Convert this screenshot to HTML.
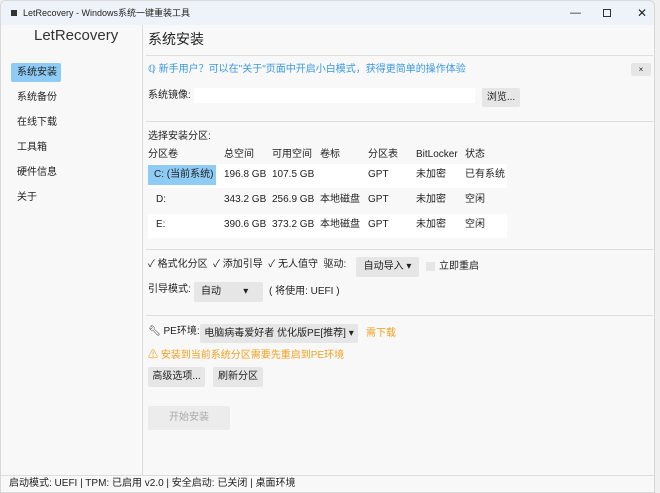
<!DOCTYPE html>
<html><head><meta charset="utf-8"><style>
*{margin:0;padding:0;box-sizing:border-box}
body{width:660px;height:493px;background:#f0f0f0;font-family:"Liberation Sans","Noto Sans CJK SC",sans-serif;font-size:10px;line-height:12px;color:#222;position:relative;overflow:hidden}
.win{position:absolute;left:0;top:0;width:655px;height:493px;background:#f8f8f8;border:1px solid #d8d8d8;border-radius:6px 6px 0 0}
.title{position:absolute;left:0;top:0;width:100%;height:24px;background:#eef3f9;border-radius:6px 6px 0 0}
.a{position:absolute;white-space:nowrap}
.btn{position:absolute;background:#e6e6e6;border-radius:2px;text-align:center}
</style></head><body>
<div class="win">
<div class="title"></div>
<div class="a" style="left:10px;top:9px;width:6px;height:6px;background:#333"></div>
<div class="a" style="left:22px;top:6px;font-size:9px">LetRecovery - Windows系统一键重装工具</div>
<div class="a" style="left:569px;top:6px;font-size:11px">—</div>
<div class="a" style="left:602px;top:8px;width:8px;height:8px;border:1px solid #333"></div>
<div class="a" style="left:636px;top:6px;font-size:12px">✕</div>
<div class="a" style="left:141px;top:24px;width:1px;height:450px;background:#ddd"></div>
<div class="a" style="left:33px;top:27px;font-size:15px;line-height:16px;color:#333">LetRecovery</div>
<div class="a" style="left:10px;top:62px;width:50px;height:19px;background:#8ecbf5;border-radius:2px"></div>
<div class="a" style="left:16px;top:66px">系统安装</div>
<div class="a" style="left:16px;top:91px">系统备份</div>
<div class="a" style="left:16px;top:116px">在线下载</div>
<div class="a" style="left:16px;top:141px">工具箱</div>
<div class="a" style="left:16px;top:166px">硬件信息</div>
<div class="a" style="left:16px;top:191px">关于</div>
<div class="a" style="left:147px;top:30px;font-size:14px;line-height:16px">系统安装</div>
<div class="a" style="left:145px;top:54px;width:507px;height:1px;background:#ddd"></div>
<div class="a" style="left:147px;top:63px;color:#3a98e0">ℚ 新手用户？可以在"关于"页面中开启小白模式，获得更简单的操作体验</div>
<div class="btn" style="left:630px;top:62px;width:20px;height:13px;font-size:8px;line-height:13px">×</div>
<div class="a" style="left:147px;top:89px">系统镜像:</div>
<div class="a" style="left:193px;top:87px;width:281px;height:15px;background:#fff"></div>
<div class="btn" style="left:481px;top:87px;width:38px;height:19px;line-height:19px">浏览...</div>
<div class="a" style="left:145px;top:120px;width:507px;height:1px;background:#ddd"></div>
<div class="a" style="left:147px;top:130px">选择安装分区:</div>
<div class="a" style="left:147px;top:148px">分区卷</div>
<div class="a" style="left:223px;top:148px">总空间</div>
<div class="a" style="left:271px;top:148px">可用空间</div>
<div class="a" style="left:319px;top:148px">卷标</div>
<div class="a" style="left:367px;top:148px">分区表</div>
<div class="a" style="left:415px;top:148px">BitLocker</div>
<div class="a" style="left:464px;top:148px">状态</div>
<div class="a" style="left:147px;top:163px;width:359px;height:24px;background:#fff"></div>
<div class="a" style="left:147px;top:164px;width:68px;height:20px;background:#8ecbf5"></div>
<div class="a" style="left:147px;top:213px;width:359px;height:24px;background:#fff"></div>
<div class="a" style="left:153px;top:168px">C: (当前系统)</div>
<div class="a" style="left:223px;top:168px">196.8 GB</div><div class="a" style="left:271px;top:168px">107.5 GB</div>
<div class="a" style="left:367px;top:168px">GPT</div><div class="a" style="left:415px;top:168px">未加密</div><div class="a" style="left:464px;top:168px">已有系统</div>
<div class="a" style="left:155px;top:193px">D:</div>
<div class="a" style="left:223px;top:193px">343.2 GB</div><div class="a" style="left:271px;top:193px">256.9 GB</div><div class="a" style="left:319px;top:193px">本地磁盘</div>
<div class="a" style="left:367px;top:193px">GPT</div><div class="a" style="left:415px;top:193px">未加密</div><div class="a" style="left:464px;top:193px">空闲</div>
<div class="a" style="left:155px;top:218px">E:</div>
<div class="a" style="left:223px;top:218px">390.6 GB</div><div class="a" style="left:271px;top:218px">373.2 GB</div><div class="a" style="left:319px;top:218px">本地磁盘</div>
<div class="a" style="left:367px;top:218px">GPT</div><div class="a" style="left:415px;top:218px">未加密</div><div class="a" style="left:464px;top:218px">空闲</div>
<div class="a" style="left:145px;top:248px;width:507px;height:1px;background:#ddd"></div>
<div class="a" style="left:147px;top:258px">✓ 格式化分区 &nbsp;✓ 添加引导 &nbsp;✓ 无人值守 &nbsp;驱动:</div>
<div class="btn" style="left:355px;top:256px;width:63px;height:20px;line-height:20px">自动导入 ▾</div>
<div class="a" style="left:425px;top:261px;width:9px;height:9px;background:#e6e6e6"></div>
<div class="a" style="left:438px;top:260px">立即重启</div>
<div class="a" style="left:147px;top:283px">引导模式:</div>
<div class="btn" style="left:193px;top:281px;width:69px;height:20px;line-height:20px;text-align:left;padding-left:7px">自动 &nbsp;&nbsp;&nbsp;&nbsp;&nbsp;&nbsp;&nbsp;▾</div>
<div class="a" style="left:268px;top:285px">( 将使用: UEFI )</div>
<div class="a" style="left:145px;top:314px;width:507px;height:1px;background:#ddd"></div>
<div class="a" style="left:147px;top:325px">🔧︎ PE环境:</div>
<div class="btn" style="left:199px;top:323px;width:158px;height:19px;line-height:19px">电脑病毒爱好者 优化版PE[推荐] ▾</div>
<div class="a" style="left:365px;top:327px;color:#f0a020">需下载</div>
<div class="a" style="left:147px;top:349px;color:#f0a020">⚠ 安装到当前系统分区需要先重启到PE环境</div>
<div class="btn" style="left:147px;top:366px;width:57px;height:20px;line-height:20px">高级选项...</div>
<div class="btn" style="left:212px;top:366px;width:50px;height:20px;line-height:20px">刷新分区</div>
<div class="btn" style="left:147px;top:405px;width:82px;height:24px;line-height:24px;background:#ececec;color:#aaa">开始安装</div>
<div class="a" style="left:0;top:474px;width:100%;height:1px;background:#ddd"></div>
<div class="a" style="left:8px;top:477px">启动模式: UEFI | TPM: 已启用 v2.0 | 安全启动: 已关闭 | 桌面环境</div>
</div>
</body></html>
